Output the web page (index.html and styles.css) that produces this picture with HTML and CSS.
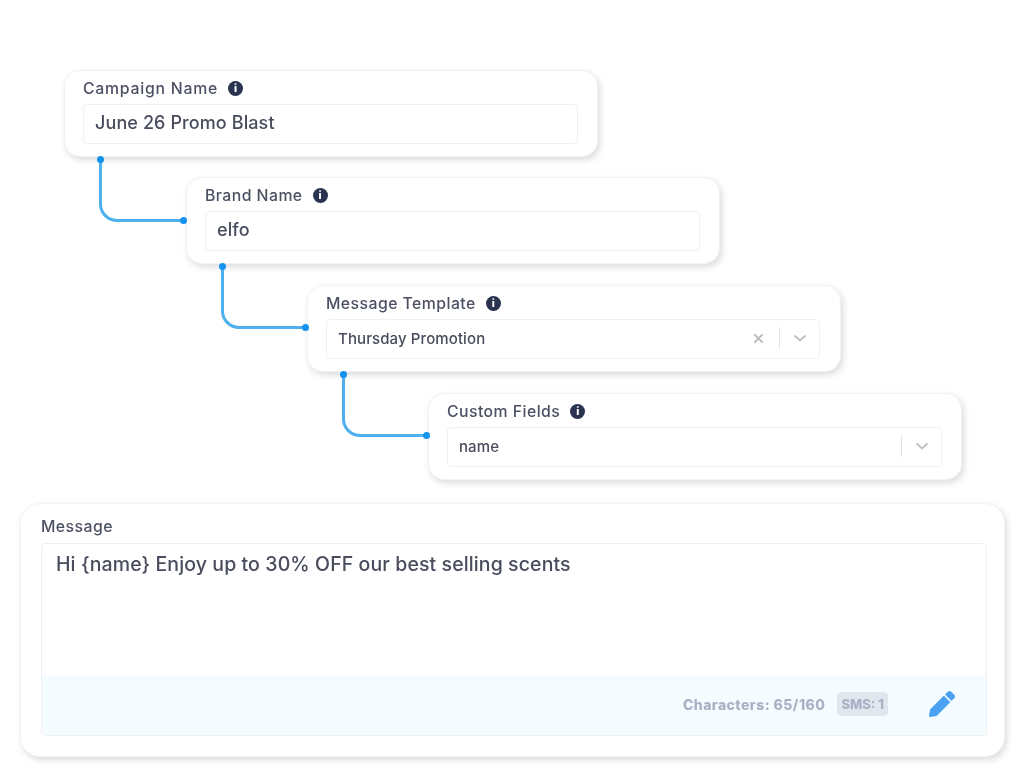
FILE: index.html
```html
<!DOCTYPE html>
<html lang="en">
<head>
    <meta charset="UTF-8">
    <meta name="viewport" content="width=device-width, initial-scale=1.0">
    <title>Campaign Form</title>
    <link rel="stylesheet" href="styles.css">
</head>
<body>
    <div class="container">
        <div class="card card-1">
            <div class="label">Campaign Name <span class="info">i</span></div>
            <div class="field field-text">June 26 Promo Blast</div>
            <div class="connector"></div>
        </div>

        <div class="card card-2">
            <div class="label">Brand Name <span class="info">i</span></div>
            <div class="field field-text">elfo</div>
            <div class="connector"></div>
        </div>

        <div class="card card-3">
            <div class="label">Message Template <span class="info">i</span></div>
            <div class="field field-select">
                <span class="value">Thursday Promotion</span>
                <svg class="clear" viewBox="0 0 12 12"><path d="M1.5 1.5l9 9M10.5 1.5l-9 9"/></svg>
                <span class="divider"></span>
                <svg class="chevron" viewBox="0 0 14 8"><path d="M1.5 1.5L7 6.5l5.5-5"/></svg>
            </div>
            <div class="connector"></div>
        </div>

        <div class="card card-4">
            <div class="label">Custom Fields <span class="info">i</span></div>
            <div class="field field-select">
                <span class="value">name</span>
                <span class="divider"></span>
                <svg class="chevron" viewBox="0 0 14 8"><path d="M1.5 1.5L7 6.5l5.5-5"/></svg>
            </div>
        </div>

        <div class="message-card">
            <div class="label">Message</div>
            <div class="message-box">
                <div class="message-text">Hi {name} Enjoy up to 30% OFF our best selling scents</div>
                <div class="message-footer">
                    <span class="count">Characters: 65/160</span>
                    <span class="sms">SMS: 1</span>
                    <svg class="pen" viewBox="0 0 512 512"><path d="M497.9 142.1l-46.1 46.1c-4.7 4.7-12.3 4.7-17 0l-111-111c-4.7-4.7-4.7-12.3 0-17l46.1-46.1c18.7-18.7 49.1-18.7 67.9 0l60.1 60.1c18.8 18.7 18.8 49.1 0 67.9zM284.2 99.8L21.6 362.4.4 483.9c-2.9 16.4 11.4 30.6 27.8 27.8l121.5-21.3 262.6-262.6c4.7-4.7 4.7-12.3 0-17l-111-111c-4.8-4.7-12.4-4.7-17.1 0z"/></svg>
                </div>
            </div>
        </div>
    </div>
</body>
</html>
```

FILE: styles.css
```css
* {
    margin: 0;
    padding: 0;
    box-sizing: border-box;
    font-family: 'Inter', 'Open Sans', sans-serif;
}

html, body {
    width: 1026px;
    height: 772px;
    overflow: hidden;
    background: white;
    color: #3d4152;
}

.container {
    padding-top: 70px;
    filter: blur(0.6px);
}

.card {
    position: relative;
    width: 534px;
    height: 87px;
    padding: 8px 19px 0 18px;
    background: white;
    border: 1px solid #f3f3f5;
    border-radius: 16px;
    box-shadow: 2px 3px 6px rgba(40, 45, 60, 0.17);
}

.card-1 {
    margin-left: 64px;
}

.card-2 {
    margin-left: 186px;
    margin-top: 20px;
}

.card-3 {
    margin-left: 307px;
    margin-top: 21px;
    padding-right: 20px;
}

.card-4 {
    margin-left: 428px;
    margin-top: 21px;
}

.label {
    display: flex;
    align-items: center;
    gap: 10px;
    height: 18px;
    font-size: 15.8px;
    font-weight: 500;
    letter-spacing: 0.45px;
    color: #4c5063;
}

.card-1 .label {
    letter-spacing: 0.75px;
}

.info {
    display: flex;
    align-items: center;
    justify-content: center;
    width: 15px;
    height: 15px;
    border-radius: 50%;
    background: #2a3350;
    color: white;
    font-size: 11px;
    font-weight: 800;
    letter-spacing: 0;
}

.field {
    display: flex;
    align-items: center;
    height: 40px;
    margin-top: 7px;
    padding: 0 12px 2px 11px;
    border: 1px solid #eef0f2;
    border-radius: 4px;
    background: white;
}

.field-text {
    padding-bottom: 3px;
    font-size: 18px;
    font-weight: 500;
    letter-spacing: 0.1px;
    color: #484c5c;
}

.field-select .value {
    flex: 1;
    font-size: 15px;
    font-weight: 500;
    letter-spacing: 0.1px;
    color: #484c5c;
}

.clear {
    width: 11px;
    height: 11px;
    margin-right: 15px;
    fill: none;
    stroke: #b9b9b9;
    stroke-width: 2;
}

.divider {
    width: 1px;
    height: 22px;
    background: #e3e3e3;
}

.chevron {
    width: 14px;
    height: 8px;
    margin: 0 0 0 13px;
    fill: none;
    stroke: #c0c0c0;
    stroke-width: 2;
}

.connector {
    position: absolute;
    left: 34px;
    top: 100%;
    width: 85px;
    height: 63px;
    margin-top: 3px;
    border-left: 3px solid #4fb0f0;
    border-bottom: 3px solid #4fb0f0;
    border-bottom-left-radius: 18px;
    z-index: 1;
}

.connector::before,
.connector::after {
    content: '';
    position: absolute;
    width: 7px;
    height: 7px;
    border-radius: 50%;
    background: #1592ee;
}

.connector::before {
    left: -5px;
    top: -3px;
}

.connector::after {
    right: -3px;
    bottom: -5px;
}

.message-card {
    width: 985px;
    height: 254px;
    margin: 23px 0 0 20px;
    padding: 13px 17px 0 20px;
    background: white;
    border: 1px solid #f3f3f5;
    border-radius: 20px;
    box-shadow: 2px 3px 6px rgba(40, 45, 60, 0.17);
}

.message-box {
    display: flex;
    flex-direction: column;
    justify-content: space-between;
    height: 193px;
    margin-top: 8px;
    border: 1px solid #eef0f3;
    border-radius: 4px;
    overflow: hidden;
}

.message-text {
    padding: 8px 14px;
    font-size: 19.5px;
    font-weight: 500;
    letter-spacing: 0.1px;
    color: #484c5c;
}

.message-footer {
    display: flex;
    align-items: center;
    justify-content: flex-end;
    height: 59px;
    padding: 0 31px 3px 0;
    background: #f4fcff;
}

.count {
    font-size: 14px;
    font-weight: 800;
    letter-spacing: 0.45px;
    color: #abb1c4;
}

.sms {
    margin-left: 12px;
    padding: 4px 4px;
    border-radius: 4px;
    background: #e2e7ef;
    font-size: 13px;
    font-weight: 800;
    color: #abb1c4;
}

.pen {
    width: 26px;
    height: 26px;
    margin-left: 41px;
    fill: #4aa3f2;
}
```
